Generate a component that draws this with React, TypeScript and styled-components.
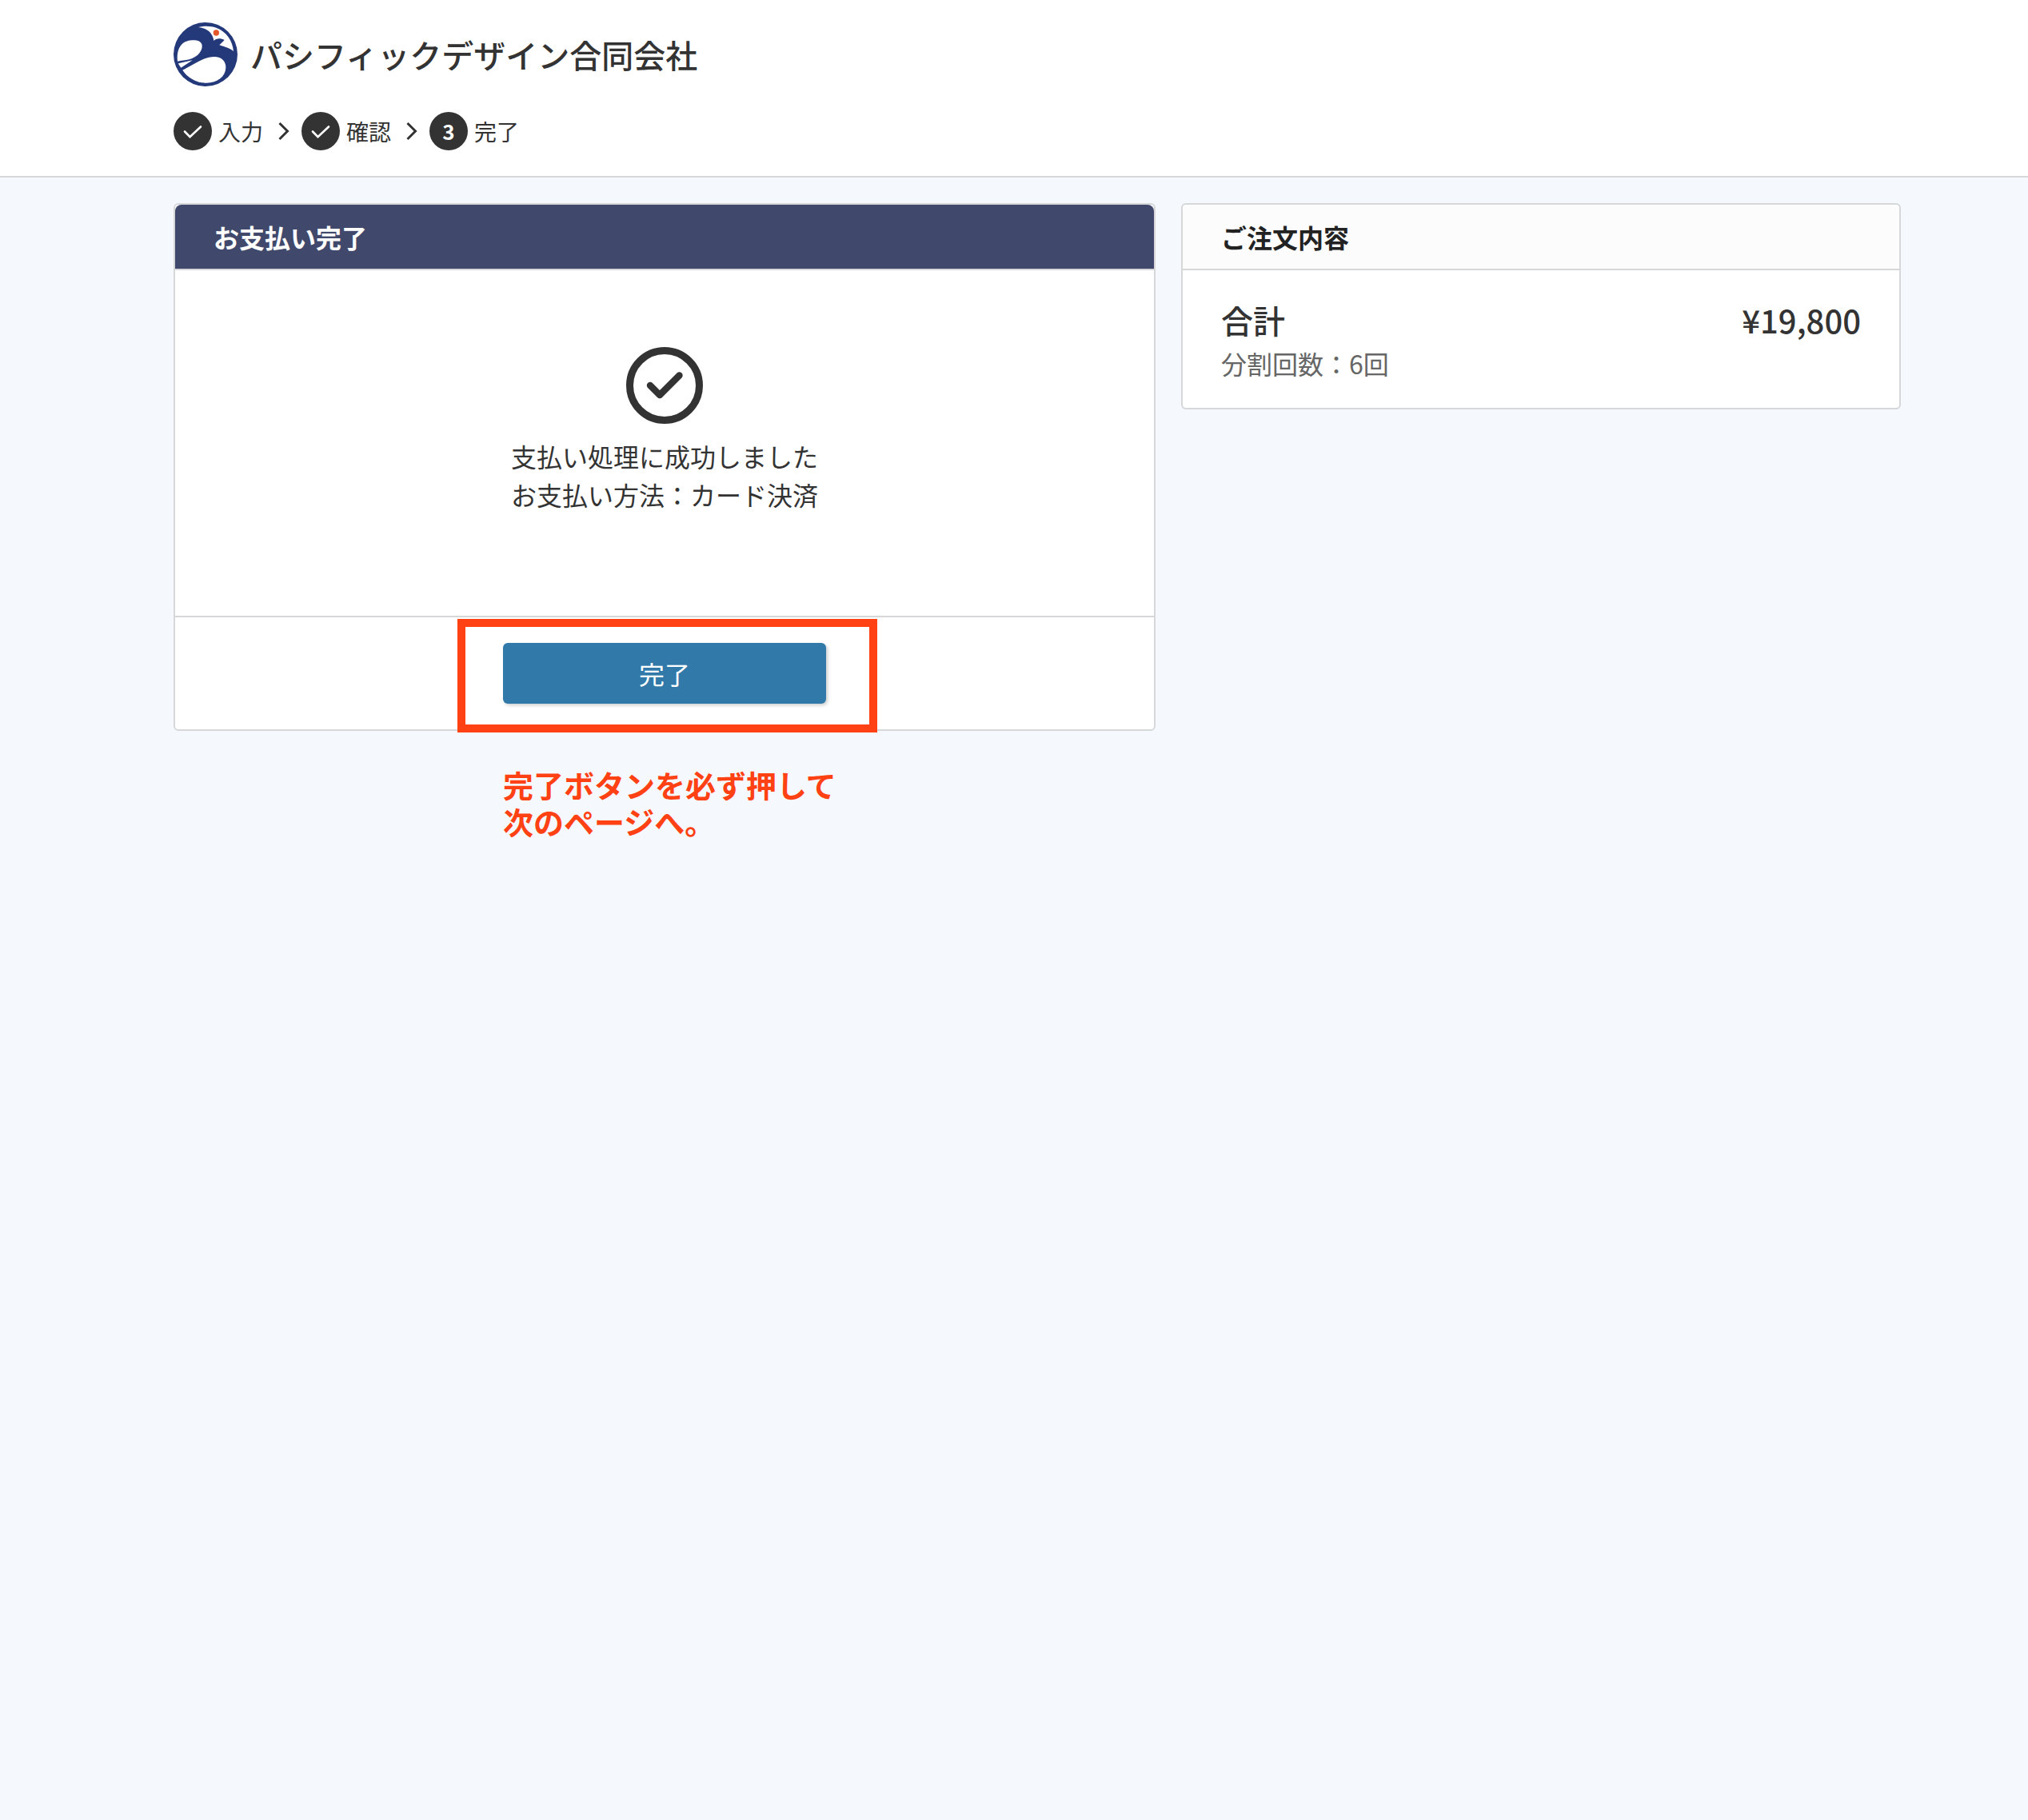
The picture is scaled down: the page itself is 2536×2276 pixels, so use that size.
import React from "react";
import styled, { createGlobalStyle } from "styled-components";

const GlobalStyle = createGlobalStyle`
  *, *::before, *::after { box-sizing: border-box; }
  body {
    margin: 0;
    min-height: 100vh;
    background: #f5f8fd;
    color: #333;
    font-family: "Noto Sans CJK JP", "Noto Sans", sans-serif;
    font-size: 32px;
    line-height: 48px;
  }
  h1, h2, p, ol, dl, dd { margin: 0; padding: 0; }
`;

const Header = styled.header`
  display: flex;
  flex-direction: column;
  gap: 32px;
  padding: 28px 159px 32px 217px;
  background: #fff;
  border-bottom: 2px solid #d5d7d9;
`;

const Brand = styled.div`
  display: flex;
  align-items: center;
  gap: 16px;
`;

const Logo = styled.svg`
  width: 80px;
  height: 80px;
`;

const CompanyName = styled.h1`
  font-size: 40px;
  font-weight: 500;
  line-height: 60px;
`;

const Steps = styled.ol`
  display: flex;
  align-items: center;
  list-style: none;
`;

const Step = styled.li`
  display: flex;
  align-items: center;
  font-size: 28px;
`;

const StepBadge = styled.span`
  display: grid;
  place-items: center;
  width: 48px;
  height: 48px;
  margin-right: 8px;
  border-radius: 50%;
  background: #333;
  color: #fff;
  font-size: 26px;
  font-weight: 700;
`;

const StepArrow = styled.svg`
  width: 48px;
  height: 48px;
`;

const Main = styled.main`
  display: grid;
  grid-template-columns: minmax(0, 1fr) 900px;
  align-items: start;
  gap: 32px;
  padding: 32px 159px 32px 217px;
`;

const PaymentColumn = styled.div`
  display: flex;
  flex-direction: column;
  gap: 44px;
`;

const Card = styled.section`
  background: #fff;
  border: 2px solid #d5d7d9;
  border-radius: 6px;
`;

const CardTitle = styled.h2<{ $accent?: boolean }>`
  padding: 16px 48px;
  border-bottom: 2px solid #d5d7d9;
  border-radius: 8px 8px 0 0;
  background: ${(p) => (p.$accent ? "#40496c" : "#fcfcfc")};
  background-clip: padding-box;
  color: ${(p) => (p.$accent ? "#fff" : "#222")};
  font-size: 32px;
  font-weight: 700;
`;

const Result = styled.div`
  display: flex;
  flex-direction: column;
  align-items: center;
  gap: 16px;
  padding: 96px 48px 128px;
  text-align: center;
`;

const ResultIcon = styled.svg`
  width: 96px;
  height: 96px;
`;

const CardFooter = styled.div`
  display: flex;
  justify-content: center;
  padding: 32px;
  border-top: 2px solid #d5d7d9;
`;

const ActionArea = styled.div`
  position: relative;
  width: 404px;
`;

const ActionButton = styled.button`
  display: block;
  width: 100%;
  height: 76px;
  padding: 0;
  border: 0;
  border-radius: 6px;
  background: #3079a9;
  box-shadow: 2px 2px 4px rgba(0, 0, 0, 0.2);
  color: #fff;
  font: inherit;
  cursor: pointer;
`;

const Highlight = styled.div`
  position: absolute;
  inset: -30px -64px -36px -57px;
  border: 10px solid #ff4113;
  pointer-events: none;
`;

const Note = styled.p`
  align-self: center;
  width: 404px;
  color: #ff4113;
  font-size: 38px;
  font-weight: 700;
  line-height: 46px;
  white-space: nowrap;
`;

const Summary = styled.div`
  padding: 32px 48px;
`;

const Total = styled.dl`
  display: flex;
  justify-content: space-between;
  font-size: 40px;
  font-weight: 500;
  line-height: 60px;
`;

const Installments = styled.p`
  color: #666;
`;

function CheckMark() {
  return (
    <svg width="48" height="48" viewBox="0 0 48 48" fill="none" stroke="#fff" strokeWidth="2.6" strokeLinecap="round" aria-hidden="true">
      <path d="M14 24.5 L20.5 31.2 L34 18.5" />
    </svg>
  );
}

function Arrow() {
  return (
    <StepArrow viewBox="0 0 48 48" fill="none" stroke="#333" strokeWidth="3" aria-hidden="true">
      <path d="M20.5 14 L30.5 24 L20.5 34" />
    </StepArrow>
  );
}

function CompanyLogo() {
  return (
    <Logo viewBox="33 36 240 240" aria-hidden="true">
      <circle cx="153" cy="156" r="120" fill="#24397a" />
      <g fill="#fff">
        <path d="M48 182 C45 156 50 133 63 119 C77 105 96 102 113 103 C131 104 142 113 140 129 C137 151 118 167 92 175 C78 178 62 180 48 182 Z" />
        <path d="M51 190 L104 178 L61 206 C57 201 53 196 51 190 Z" />
        <path d="M67 215 L126 183 C150 170 171 164 190 165 C216 167 230 184 229 207 C227 240 198 262 157 263 C119 263 85 244 67 215 Z" />
        <path d="M126 54 C147 48 172 49 193 56 C231 70 255 104 258 145 C247 133 228 129 205 121 C212 115 217 109 224 102 C211 95 194 94 184 105 C181 77 160 57 126 54 Z" />
      </g>
      <circle cx="193" cy="75" r="11" fill="#e3572a" />
    </Logo>
  );
}

export default function App() {
  return (
    <>
      <GlobalStyle />
      <Header>
        <Brand>
          <CompanyLogo />
          <CompanyName>パシフィックデザイン合同会社</CompanyName>
        </Brand>
        <Steps>
          <Step>
            <StepBadge><CheckMark /></StepBadge>
            入力
            <Arrow />
          </Step>
          <Step>
            <StepBadge><CheckMark /></StepBadge>
            確認
            <Arrow />
          </Step>
          <Step aria-current="step">
            <StepBadge>3</StepBadge>
            完了
          </Step>
        </Steps>
      </Header>
      <Main>
        <PaymentColumn>
          <Card>
            <CardTitle $accent>お支払い完了</CardTitle>
            <Result>
              <ResultIcon viewBox="0 0 96 96" fill="none" stroke="#333" aria-hidden="true">
                <circle cx="48" cy="48" r="43.5" strokeWidth="9" />
                <path d="M30 48 L42 60 L66.5 35.5" strokeWidth="8.4" strokeLinecap="round" strokeLinejoin="round" />
              </ResultIcon>
              <p>
                支払い処理に成功しました
                <br />
                お支払い方法：カード決済
              </p>
            </Result>
            <CardFooter>
              <ActionArea>
                <ActionButton type="button">完了</ActionButton>
                <Highlight />
              </ActionArea>
            </CardFooter>
          </Card>
          <Note>
            完了ボタンを必ず押して
            <br />
            次のページへ。
          </Note>
        </PaymentColumn>
        <Card>
          <CardTitle>ご注文内容</CardTitle>
          <Summary>
            <Total>
              <dt>合計</dt>
              <dd>¥19,800</dd>
            </Total>
            <Installments>分割回数：6回</Installments>
          </Summary>
        </Card>
      </Main>
    </>
  );
}
